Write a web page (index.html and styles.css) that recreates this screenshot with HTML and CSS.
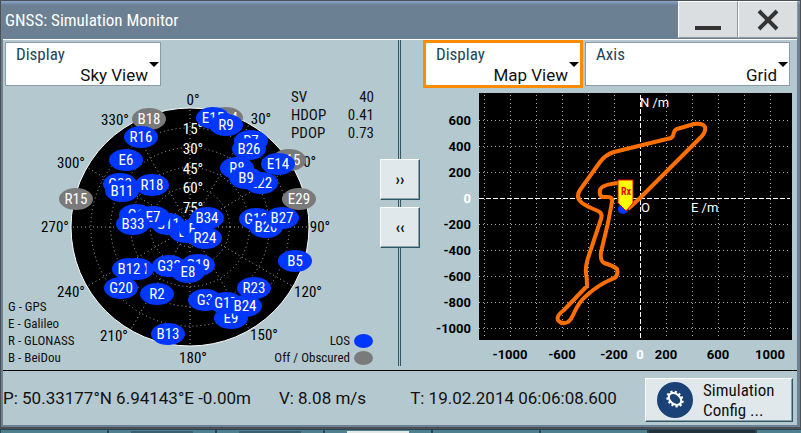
FILE: index.html
```html
<!DOCTYPE html>
<html lang="en">
<head>
  <meta charset="UTF-8">
  <meta name="viewport" content="width=device-width, initial-scale=1">
  <title>GNSS: Simulation Monitor</title>
  <link rel="stylesheet" href="styles.css">
</head>
<body>
  <div class="window">
    <header class="titlebar">
      <h1>GNSS: Simulation Monitor</h1>
      <button class="win-btn" type="button" aria-label="Minimize">
        <svg width="26" height="26" viewBox="0 0 26 26"><path d="M0 21h26" stroke="#333" stroke-width="4"/></svg>
      </button>
      <button class="win-btn" type="button" aria-label="Close">
        <svg width="26" height="26" viewBox="0 0 26 26"><path d="M4 4l18 18M22 4L4 22" stroke="#333" stroke-width="4"/></svg>
      </button>
    </header>

    <main class="content">
      <div class="panes">
        <!-- Sky view -->
        <section class="pane">
          <div class="fields fields-left">
            <div class="field">
              <label for="left-display">Display</label>
              <select id="left-display"><option>Sky View</option><option>Map View</option></select>
            </div>
          </div>
          <div class="sky">
            <svg class="chart" viewBox="-187 -139 377 282" role="img" aria-label="Sky view">
              <circle class="sky-disc" r="119"/>
              <g id="sky-grid"></g>
              <g id="sky-labels"></g>
              <g id="sats"></g>
            </svg>
            <table class="readout">
              <tr><th scope="row">SV</th><td>40</td></tr>
              <tr><th scope="row">HDOP</th><td>0.41</td></tr>
              <tr><th scope="row">PDOP</th><td>0.73</td></tr>
            </table>
            <ul class="legend systems">
              <li>G - GPS</li>
              <li>E - Galileo</li>
              <li>R - GLONASS</li>
              <li>B - BeiDou</li>
            </ul>
            <ul class="legend states">
              <li>LOS <span class="dot"></span></li>
              <li>Off / Obscured <span class="dot off"></span></li>
            </ul>
          </div>
        </section>

        <div class="divider">
          <button class="shift-btn" type="button" aria-label="Expand left view">››</button>
          <button class="shift-btn" type="button" aria-label="Expand right view">‹‹</button>
        </div>

        <!-- Map view -->
        <section class="pane">
          <div class="fields fields-right">
            <div class="field focused">
              <label for="right-display">Display</label>
              <select id="right-display"><option>Map View</option><option>Sky View</option></select>
            </div>
            <div class="field wide">
              <label for="axis">Axis</label>
              <select id="axis"><option>Grid</option><option>Circular</option></select>
            </div>
          </div>
          <svg class="chart" viewBox="-220 -110 377 282" role="img" aria-label="Map view">
            <rect x="-161" y="-105" width="313" height="247"/>
            <g id="map-grid"></g>
            <path class="axis-line" d="M-161 0H150M0 -103V142"/>
            <path class="track" d="M-12 11L0 0L62 -62Q66 -67 65 -71Q63 -75 54 -74L37 -69Q34 -68 33 -62L31 -60L-26 -46Q-35 -43 -40 -36L-60 -8Q-65 -1 -58 5Q-54 8 -42 13Q-37 15 -39 21L-50 54Q-55 68 -54 75Q-53 80 -53 88L-76 112Q-84 118 -82 122Q-79 127 -72 124Q-69 122 -66 115Q-61 104 -54 98Q-42 87 -28 81Q-21 79 -23 71Q-26 68 -36 65Q-40 63 -39 54L-32 25L-28 4Q-27 -1 -32 -1L-38 -1Q-41 -3 -40 -8Q-38 -14 -20 -15"/>
            <circle class="fix" cx="-17" cy="11" r="5"/>
            <path class="receiver" d="M-22 -18H-7V5L-14 13L-22 5Z"/>
            <text class="rx" x="-14" y="-3">Rx</text>
            <g class="axis-name">
              <text x="0" y="-91">N /m</text>
              <text x="1" y="14">O</text>
              <text x="51" y="14">E /m</text>
            </g>
            <g id="map-ticks"></g>
          </svg>
        </section>
      </div>

      <footer class="status">
        <span>P: 50.33177°N 6.94143°E -0.00m</span>
        <span>V: 8.08 m/s</span>
        <span class="time">T: 19.02.2014 06:06:08.600</span>
        <button class="config-btn" type="button">
          <svg width="36" height="36" viewBox="0 0 36 36">
            <circle cx="18" cy="18" r="18" fill="#1b4277"/>
            <g fill="none" stroke="#fff" transform="rotate(40 18 17)">
              <ellipse cx="18" cy="17" rx="7" ry="5" stroke-width="2"/>
              <ellipse cx="18" cy="17" rx="8" ry="6" stroke-width="3" stroke-dasharray="2 2"/>
            </g>
          </svg>
          <span>Simulation<br>Config ...</span>
        </button>
      </footer>
    </main>
  </div>

  <div class="taskbar">
    <span class="task"></span>
    <span class="task"><i class="thumb"></i></span>
    <span class="task"><i class="thumb"></i></span>
    <span class="task"><i class="thumb light"></i></span>
    <span class="task"></span>
    <span class="task"></span>
    <span class="task dark"></span>
    <span class="task"></span>
  </div>

  <script src="app.js"></script>
</body>
</html>
```
FILE: styles.css
```css
* {
  box-sizing: border-box;
}

body {
  margin: 0;
  height: 100vh;
  display: flex;
  flex-direction: column;
  overflow: hidden;
  background: #2c4654;
  font-family: "Roboto Condensed", Roboto, sans-serif;
  font-size: 16px;
  color: #111;
}

button,
select {
  font: inherit;
  color: inherit;
}

ul {
  list-style: none;
  margin: 0;
  padding: 0;
}

.window {
  border: 1px solid #4c4f54;
  border-bottom-width: 2px;
  background: #6c8094;
}

/* title bar */
.titlebar {
  display: flex;
  height: 38px;
  padding-right: 2px;
  background: linear-gradient(#88a8cf, #6c8094 4px);
}

.titlebar h1 {
  flex: 1;
  margin: 0;
  padding-left: 4px;
  font-size: 17px;
  font-weight: 400;
  line-height: 38px;
  color: #fff;
}

.win-btn {
  width: 60px;
  height: 37px;
  padding: 0;
  display: grid;
  place-items: center;
  border: 1px solid;
  border-color: #fff #8d979f #8d979f #fff;
  background: #dadee1;
}

.content {
  margin: 0 3px 2px 2px;
  border-top: 1px solid #fff;
  background: #b4c8cf;
}

.panes {
  display: grid;
  grid-template-columns: 1fr 40px 1fr;
  border-bottom: 1px solid #000;
}

.chart {
  display: block;
  width: 100%;
}

/* drop-down fields */
.fields {
  display: flex;
  gap: 4px;
  height: 48px;
}

.fields-left {
  padding: 2px;
}

.fields-right {
  padding: 2px 7px 2px 5px;
}

.field {
  position: relative;
  width: 156px;
  height: 44px;
  border: 1px solid #8a9da6;
  background: #fff;
}

.field.wide {
  flex: 1;
}

.field.focused {
  outline: 3px solid #ff8c00;
  outline-offset: -1px;
}

.field label {
  position: absolute;
  left: 10px;
  top: 1px;
  font-size: 17px;
  line-height: 20px;
  color: #1f4459;
}

.field select {
  width: 100%;
  height: 100%;
  padding: 22px 12px 0 0;
  border: 0;
  appearance: none;
  background: none;
  font-family: Roboto, sans-serif;
  font-size: 17px;
  line-height: 20px;
  text-align-last: right;
}

.field::after {
  content: "";
  position: absolute;
  right: 1px;
  top: 19px;
  border: 5px solid transparent;
  border-top-color: #000;
  border-bottom: 0;
}

/* sky view */
.sky {
  display: grid;
}

.sky > * {
  grid-area: 1 / 1;
}

.sky-disc {
  stroke: #fff;
}

.grid-line {
  fill: none;
  stroke: #aaa;
  stroke-dasharray: 1 3;
}

.azimuth,
.elevation {
  font-size: 15px;
  text-anchor: middle;
}

.elevation {
  fill: #fff;
}

.sat ellipse {
  fill: #0037ff;
}

.sat.off ellipse {
  fill: #7a7a7a;
}

.sat text {
  fill: #fff;
  font-size: 15px;
  text-anchor: middle;
}

.readout {
  align-self: start;
  justify-self: end;
  width: 83px;
  margin-right: 6px;
  border-spacing: 0;
  font-size: 15px;
  line-height: 18px;
}

.readout th,
.readout td {
  padding: 0;
  font-weight: 400;
  text-align: left;
}

.readout td {
  text-align: right;
}

.legend {
  align-self: end;
  font-size: 13px;
  line-height: 17px;
}

.systems {
  justify-self: start;
  padding: 0 0 4px 5px;
}

.states {
  justify-self: end;
  padding: 0 7px 4px 0;
}

.states li {
  display: flex;
  justify-content: flex-end;
  align-items: center;
  gap: 4px;
}

.dot {
  width: 19px;
  height: 14px;
  border-radius: 50%;
  background: #0037ff;
}

.dot.off {
  background: #7a7a7a;
}

/* divider with the two shift buttons */
.divider {
  display: flex;
  flex-direction: column;
  gap: 7px;
  padding-top: 119px;
  background: linear-gradient(90deg, #2f5566 1px, #b4c8cf 1px 2px, #2f5566 2px) 18px 0 / 3px calc(100% - 4px) no-repeat;
}

.shift-btn,
.config-btn {
  border: 1px solid;
  border-color: #fff #2f5566 #2f5566 #fff;
  background: #e0e8ec;
  box-shadow: inset -1px -1px #8aa0aa;
}

.shift-btn {
  height: 41px;
  padding: 0;
  font-weight: 700;
}

/* map view */
.axis-line {
  stroke: #fff;
  stroke-dasharray: 5 2;
  shape-rendering: crispEdges;
}

.track {
  fill: none;
  stroke: #ff6f00;
  stroke-width: 4;
  stroke-linejoin: round;
}

.fix {
  fill: #0037ff;
}

.receiver {
  fill: #ff0;
  stroke: #e00;
}

.rx {
  fill: #e00;
  font-size: 10px;
  font-weight: 700;
  text-anchor: middle;
}

.axis-name {
  fill: #fff;
  font-family: Roboto, sans-serif;
  font-size: 13px;
}

.tick {
  font-family: Roboto, sans-serif;
  font-size: 13px;
  font-weight: 700;
}

.tick.zero {
  fill: #fff;
}

.tick-x {
  text-anchor: middle;
}

.tick-y {
  text-anchor: end;
}

/* status line */
.status {
  display: flex;
  align-items: center;
  gap: 28px;
  height: 54px;
  padding-right: 4px;
  font-family: Roboto, sans-serif;
  font-size: 17px;
  white-space: nowrap;
}

.time {
  margin-left: 16px;
}

.config-btn {
  display: flex;
  align-items: center;
  gap: 10px;
  width: 148px;
  height: 44px;
  margin: 4px 0 0 auto;
  padding: 0 11px;
  font-family: "Roboto Condensed", Roboto, sans-serif;
  font-size: 17px;
  line-height: 20px;
  text-align: left;
}

/* strip of the task bar under the window */
.taskbar {
  flex: 1;
  display: grid;
  grid-template-columns: repeat(7, 106px) 1fr;
  gap: 2px;
  padding: 1px 0 0 1px;
}

.task {
  display: grid;
  justify-content: center;
  background: #4f8090;
}

.task.dark {
  background: #22323c;
}

.thumb {
  width: 62px;
  margin-top: 1px;
  background: #3a6170;
}

.thumb.light {
  background: #e4e8e6;
}
```
FILE: app.js
```js
const SVG_NS = 'http://www.w3.org/2000/svg';

function add(parent, tag, attrs, text) {
  const el = document.createElementNS(SVG_NS, tag);
  for (const key in attrs) el.setAttribute(key, attrs[key]);
  if (text !== undefined) el.textContent = text;
  parent.appendChild(el);
  return el;
}

// Sky view: elevation rings and azimuth spokes
const RADIUS = 119;
const skyGrid = document.getElementById('sky-grid');
const skyLabels = document.getElementById('sky-labels');

for (let elevation = 15; elevation < 90; elevation += 15) {
  const r = RADIUS * (90 - elevation) / 90;
  add(skyGrid, 'circle', { class: 'grid-line', r });
  add(skyLabels, 'text', { class: 'elevation', x: 3, y: 6 - r }, elevation + '°');
}

// label centres, clockwise from north
const azimuthLabels = [
  [3, -122], [71, -103], [116, -60], [130, 5], [118, 70], [74, 113],
  [3, 136], [-76, 114], [-119, 70], [-135, 5], [-119, -59], [-75, -102]
];

azimuthLabels.forEach(([x, y], i) => {
  const a = i * Math.PI / 6;
  add(skyGrid, 'line', { class: 'grid-line', x2: RADIUS * Math.sin(a), y2: -RADIUS * Math.cos(a) });
  add(skyLabels, 'text', { class: 'azimuth', x, y }, i * 30 + '°');
});

// id, x, y from the zenith, obscured
const satellites = [
  ['B18', -41, -108, 1], ['R16', -49, -90], ['E6', -64, -67],
  ['G22', -70, -43], ['B11', -68, -36], ['R18', -38, -42],
  ['R15', -114, -28, 1], ['E29', 109, -28, 1],
  ['G14', 36, -109, 1], ['E15', 23, -109], ['R9', 36, -102],
  ['R7', 61, -86], ['B26', 59, -78],
  ['B15', 99, -67, 1], ['E14', 88, -63],
  ['R8', 47, -59], ['E22', 71, -44], ['B9', 56, -49],
  ['G12', 66, -8], ['B20', 76, 0], ['B27', 92, -9],
  ['G6', -54, -12], ['G11', -22, -3], ['E7', -37, -10], ['B33', -57, -3],
  ['E1', -4, 5], ['E2', 6, 2], ['B34', 17, -9], ['R24', 15, 11],
  ['G21', -53, 42], ['B12', -61, 42], ['G20', -69, 61],
  ['G32', -21, 39], ['G19', 8, 38], ['E8', -2, 45],
  ['R2', -33, 67], ['B13', -22, 107], ['B5', 105, 34],
  ['E9', 41, 91], ['G3', 15, 73], ['G17', 36, 76],
  ['R23', 64, 61], ['B24', 55, 79]
];

const sats = document.getElementById('sats');
for (const [id, x, y, off] of satellites) {
  const g = add(sats, 'g', { class: off ? 'sat off' : 'sat' });
  add(g, 'ellipse', { cx: x, cy: y, rx: 17, ry: 11 });
  add(g, 'text', { x, y: y + 5 }, id);
}

// Map view: 26 units for each 200 m
const STEP = 26;
const mapGrid = document.getElementById('map-grid');
const mapTicks = document.getElementById('map-ticks');

for (let i = -6; i <= 5; i++) {
  if (i !== 0) add(mapGrid, 'path', { class: 'grid-line', 'shape-rendering': 'crispEdges', d: `M${i * STEP} -103V138` });
}
for (let i = -3; i <= 5; i++) {
  if (i !== 0) add(mapGrid, 'path', { class: 'grid-line', 'shape-rendering': 'crispEdges', d: `M-161 ${i * STEP}H149` });
  add(mapTicks, 'text', { class: i ? 'tick tick-y' : 'tick tick-y zero', x: -169, y: i * STEP + 5 }, -i * 200);
}
for (const m of [-1000, -600, -200, 0, 200, 600, 1000]) {
  add(mapTicks, 'text', { class: m ? 'tick tick-x' : 'tick tick-x zero', x: m / 200 * STEP, y: 161 }, m);
}
```
